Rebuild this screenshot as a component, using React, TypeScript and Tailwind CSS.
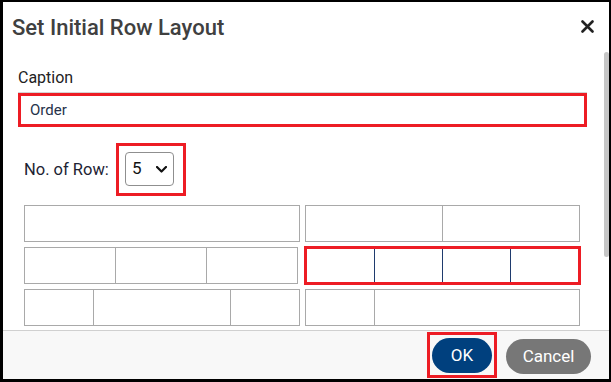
import React from "react";

const GridRow: React.FC<{ cells: string[]; className?: string }> = ({ cells, className }) => {
  return (
    <div className={`flex h-[37px] border border-[#a9a9a9] ${className ?? ""}`}>
      {cells.map((w, i) => (
        <div key={i} className={`${w} h-full ${i > 0 ? "border-l border-[#a9a9a9]" : ""}`} />
      ))}
    </div>
  );
};

export default function App() {
  return (
    <div className="w-[611px] h-[382px] bg-white border-black border-t-2 border-l-[3px] border-r-2 border-b-[3px] flex flex-col overflow-hidden font-['Roboto',sans-serif]">
      {/* header */}
      <div className="h-[50px] flex items-center justify-between pl-[9px] pr-[15px] shrink-0">
        <h2 className="text-[22px] leading-7 font-medium text-[#404040] pt-[1px]">Set Initial Row Layout</h2>
        <svg width="13" height="13" viewBox="0 0 13 13" className="mt-[-1px]">
          <path d="M1.5 1.5l10 10M11.5 1.5l-10 10" stroke="#222" strokeWidth="2.6" strokeLinecap="round" />
        </svg>
      </div>

      {/* body */}
      <div className="relative flex-1 pl-[15px] pr-[22px] pt-[14px]">
        <label className="block text-[16px] leading-6 text-[#222]">Caption</label>
        <div className="mt-[3px] h-[34px] border-[3px] border-[#ed1c24] shadow-[0_-1px_0_#d4d4d4] flex items-center pl-[9px]">
          <span className="text-[15px] text-[#26324a]">Order</span>
        </div>

        <div className="pl-[6px] pr-[7px]">
          <div className="mt-[16px] flex items-center">
            <span className="w-[92px] text-[16.5px] leading-6 text-[#1d2333]">No. of Row:</span>
            <div className="w-[70px] h-[53px] border-[3px] border-[#ed1c24] pl-[6px] pt-[6px]">
              <div className="w-[49px] h-[34px] rounded-[4px] border border-[#8f8f8f] flex items-center justify-between pl-[6px] pr-[6px]">
                <span className="text-[17px] text-[#111]">5</span>
                <svg width="11" height="7" viewBox="0 0 11 7">
                  <path d="M1 1l4.5 4.5L10 1" stroke="#111" strokeWidth="2.2" fill="none" strokeLinecap="round" strokeLinejoin="round" />
                </svg>
              </div>
            </div>
          </div>

          <div className="mt-[9px] grid grid-cols-[276px_275px] gap-x-[5px] gap-y-[5px]">
            <GridRow cells={["flex-1"]} />
            <GridRow cells={["flex-1", "flex-1"]} />
            <GridRow cells={["flex-1", "flex-1", "flex-1"]} className="mr-[2px]" />
            <div className="-m-px h-[39px] flex border-[3px] border-[#ed1c24]">
              <div className="flex-1" />
              <div className="flex-1 border-l border-[#1f3b6e]" />
              <div className="flex-1 border-l border-[#1f3b6e]" />
              <div className="flex-1 border-l border-[#1f3b6e]" />
            </div>
            <GridRow cells={["flex-1", "flex-[2]", "flex-1"]} />
            <GridRow cells={["flex-1", "flex-[3]"]} />
          </div>
        </div>

        <div className="absolute right-0 top-0 w-[5px] h-[205px] rounded-full bg-[#c6c6c6]" />
      </div>

      {/* footer */}
      <div className="h-[49px] shrink-0 border-t border-[#d0d0d0] bg-[#f8f8f8] flex items-center justify-end pr-[18px]">
        <div className="w-[70px] h-[46px] border-[3px] border-[#ed1c24] flex items-center justify-center">
          <button className="w-[60px] h-[35px] rounded-full bg-[#00407e] text-white text-[17px] mt-[1px]">OK</button>
        </div>
        <button className="ml-[9px] mt-[3px] w-[85px] h-[35px] rounded-full bg-[#777777] text-white text-[17px]">Cancel</button>
      </div>
    </div>
  );
}
